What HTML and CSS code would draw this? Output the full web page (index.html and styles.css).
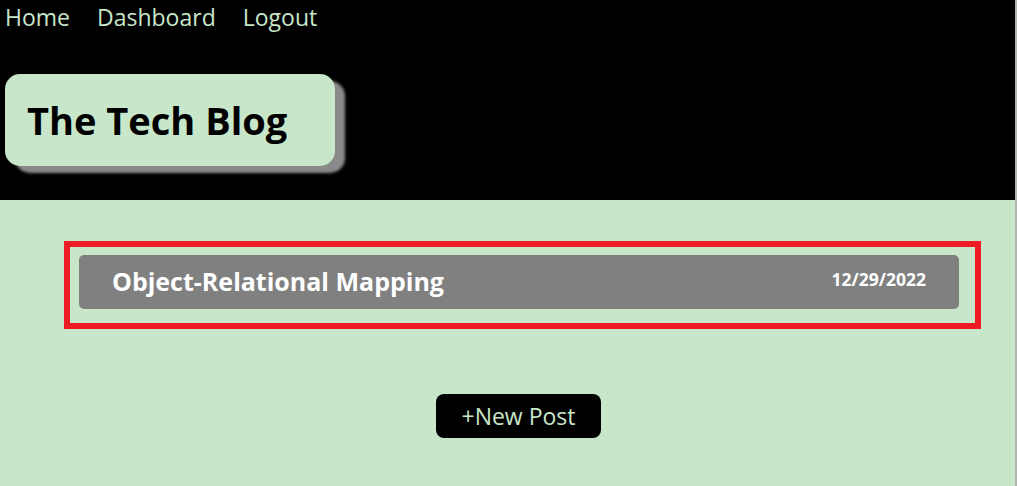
FILE: index.html
```html
<!DOCTYPE html>
<html>
<head>
<meta charset="utf-8">
<title>The Tech Blog</title>
<link rel="stylesheet" href="styles.css">
</head>
<body>
<div class="page">
<header class="site-header">
  <nav class="nav">
    <a class="nav-link" href="#">Home</a>
    <a class="nav-link" href="#">Dashboard</a>
    <a class="nav-link" href="#">Logout</a>
  </nav>
  <div class="brand">
    <h1 class="brand-title">The Tech Blog</h1>
  </div>
</header>
<main class="main">
  <section class="post-list">
    <article class="post">
      <h2 class="post-title">Object-Relational Mapping</h2>
      <span class="post-date">12/29/2022</span>
    </article>
  </section>
  <div class="actions">
    <button class="new-post">+New Post</button>
  </div>
</main>
</div>
</body>
</html>
```

FILE: styles.css
```css
html, body {
  margin: 0;
  padding: 0;
  height: 100%;
}
body {
  font-family: "Open Sans", "Noto Sans", sans-serif;
  background: #c8e6c9;
  overflow: hidden;
}
.page {
  height: 100%;
  border-right: 2px solid #b0b6b0;
  margin-right: 0;
}
.site-header {
  background: #000;
  height: 200px;
  box-sizing: border-box;
}
.nav {
  display: flex;
  gap: 27px;
  padding: 0 0 0 5px;
  height: 34px;
  align-items: center;
}
.nav-link {
  color: #c8e6c9;
  text-decoration: none;
  font-size: 23px;
}
.brand {
  margin: 40px 0 0 5px;
  width: 330px;
  height: 92px;
  box-sizing: border-box;
  background: #c8e6c9;
  border-radius: 15px;
  box-shadow: 10px 7px 3px #8a8a8a;
  display: flex;
  align-items: center;
  padding-left: 22px;
}
.brand-title {
  margin: 0;
  font-size: 38px;
  font-weight: 700;
  color: #000;
}
.main {
  padding-top: 41px;
}
.post-list {
  margin: 0 34px 0 64px;
  border: 6px solid #ed1c24;
  padding: 8px 16px 14px 9px;
}
.post {
  background: #808080;
  border-radius: 5px;
  height: 54px;
  display: flex;
  align-items: center;
  justify-content: space-between;
  padding: 0 33px 0 33px;
}
.post-title {
  margin: 0;
  color: #fff;
  font-size: 25px;
  font-weight: 700;
  margin-top: -2px;
}
.post-date {
  color: #fff;
  font-size: 17.5px;
  font-weight: 700;
  margin-top: -6px;
}
.actions {
  display: flex;
  justify-content: center;
  padding-top: 65px;
  padding-left: 22px;
}
.new-post {
  background: #000;
  color: #c8e6c9;
  border: none;
  border-radius: 8px;
  font-family: inherit;
  font-size: 23px;
  width: 165px;
  height: 44px;
  padding: 0;
}
```
